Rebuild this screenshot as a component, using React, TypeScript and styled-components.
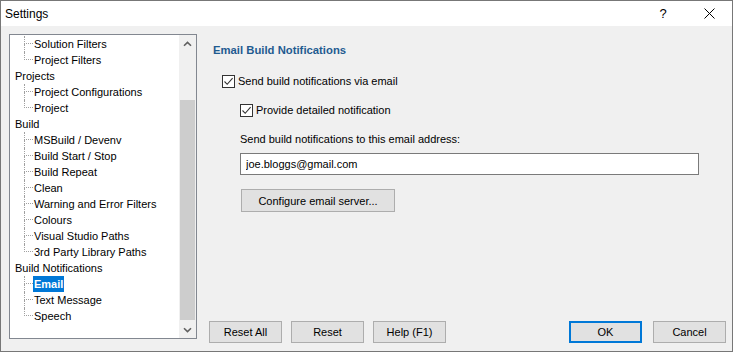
import styled, { createGlobalStyle } from 'styled-components';

const GlobalStyle = createGlobalStyle`
	html, body {
		margin: 0;
		padding: 0;
		background: #ffffff;
	}
	body {
		font-family: "Liberation Sans", Arial, sans-serif;
		font-size: 11px;
		color: #000000;
	}
	* {
		box-sizing: border-box;
	}
`

interface ITreeItem {
	label: string;
	child?: boolean;
	last?: boolean;
	selected?: boolean;
}

const treeItems: ITreeItem[] = [
	{ label: 'Solution Filters', child: true },
	{ label: 'Project Filters', child: true, last: true },
	{ label: 'Projects' },
	{ label: 'Project Configurations', child: true },
	{ label: 'Project', child: true, last: true },
	{ label: 'Build' },
	{ label: 'MSBuild / Devenv', child: true },
	{ label: 'Build Start / Stop', child: true },
	{ label: 'Build Repeat', child: true },
	{ label: 'Clean', child: true },
	{ label: 'Warning and Error Filters', child: true },
	{ label: 'Colours', child: true },
	{ label: 'Visual Studio Paths', child: true },
	{ label: '3rd Party Library Paths', child: true, last: true },
	{ label: 'Build Notifications' },
	{ label: 'Email', child: true, selected: true },
	{ label: 'Text Message', child: true },
	{ label: 'Speech', child: true, last: true },
];

function CheckMark(): JSX.Element {
	return (
		<svg width="11" height="11" viewBox="0 0 11 11">
			<path d="M1.5 5.5 L4.2 8.3 L9.6 2.2" fill="none" stroke="#333333" strokeWidth="1.1" />
		</svg>
	)
}

function Chevron({ down }: { down?: boolean }): JSX.Element {
	return (
		<svg width="9" height="6" viewBox="0 0 9 6">
			<path
				d={down ? 'M1 1.2 L4.5 4.6 L8 1.2' : 'M1 4.8 L4.5 1.4 L8 4.8'}
				fill="none"
				stroke="#606060"
				strokeWidth="1.6" />
		</svg>
	)
}

function CheckOption({ indent, label }: { indent: number; label: string }): JSX.Element {
	return (
		<CheckRow $indent={indent}>
			<CheckBox>
				<CheckMark />
			</CheckBox>
			<span>{label}</span>
		</CheckRow>
	)
}

function App(): JSX.Element {
	return (
		<>
			<GlobalStyle />
			<Window>
				<TitleBar>
					<Title>Settings</Title>
					<CaptionButton>?</CaptionButton>
					<CaptionButton>
						<svg width="11" height="11" viewBox="0 0 11 11">
							<path d="M0.5 0.5 L10.5 10.5 M10.5 0.5 L0.5 10.5" stroke="#000000" strokeWidth="1" />
						</svg>
					</CaptionButton>
				</TitleBar>

				<Body>
					<TreeBox>
						<TreeList>
							{treeItems.map((item) => (
								<TreeRow key={item.label} $child={!!item.child}>
									{item.child && (
										<Connector>
											<ConnectorTop />
											<ConnectorBottom $last={!!item.last} />
										</Connector>
									)}
									<TreeLabel $selected={!!item.selected}>
										{item.label}
									</TreeLabel>
								</TreeRow>
							))}
						</TreeList>
						<ScrollBar>
							<ScrollArrow>
								<Chevron />
							</ScrollArrow>
							<ScrollTrack>
								<ScrollThumb />
							</ScrollTrack>
							<ScrollArrow>
								<Chevron down />
							</ScrollArrow>
						</ScrollBar>
					</TreeBox>

					<Panel>
						<Content>
							<Heading>Email Build Notifications</Heading>
							<CheckOption indent={9} label="Send build notifications via email" />
							<CheckOption indent={27} label="Provide detailed notification" />
							<FieldLabel>Send build notifications to this email address:</FieldLabel>
							<EmailInput readOnly value="joe.bloggs@gmail.com" />
							<ConfigureButton>Configure email server...</ConfigureButton>
						</Content>

						<ButtonRow>
							<ButtonGroup>
								<DialogButton>Reset All</DialogButton>
								<DialogButton>Reset</DialogButton>
								<DialogButton>Help (F1)</DialogButton>
							</ButtonGroup>
							<ButtonGroup $wide>
								<DialogButton $default>OK</DialogButton>
								<DialogButton>Cancel</DialogButton>
							</ButtonGroup>
						</ButtonRow>
					</Panel>
				</Body>
			</Window>
		</>
	)
}

export default App;

const Window = styled.div`
    width : 733px;
    height : 352px;
    display : flex;
    flex-direction : column;
    border : 1px solid #777777;
    background-color : #f0f0f0;
`

const TitleBar = styled.div`
    height : 25px;
    display : flex;
    align-items : center;
    background-color : #ffffff;
    user-select : none;
`

const Title = styled.span`
    flex : 1;
    padding-left : 4px;
    font-size : 12px;
`

const CaptionButton = styled.div`
    width : 46px;
    height : 25px;
    display : flex;
    align-items : center;
    justify-content : center;
    font-size : 13px;
`

const Body = styled.div`
    flex : 1;
    display : flex;
    padding : 8px 6px 8px 8px;
    min-height : 0;
`

const TreeBox = styled.div`
    width : 188px;
    margin-bottom : 4px;
    display : flex;
    background-color : #ffffff;
    border : 1px solid #828790;
`

const TreeList = styled.div`
    flex : 1;
    padding-top : 1px;
    overflow : hidden;
`

const TreeRow = styled.div<{ $child: boolean }>`
    height : 16px;
    display : flex;
    align-items : center;
    padding-left : ${(props) => (props.$child ? '14px' : '4px')};
    white-space : nowrap;
`

const Connector = styled.span`
    width : 9px;
    height : 16px;
    display : flex;
    flex-direction : column;
`

const ConnectorTop = styled.span`
    height : 8px;
    border-left : 1px dotted #a0a0a0;
    border-bottom : 1px dotted #a0a0a0;
`

const ConnectorBottom = styled.span<{ $last: boolean }>`
    height : 8px;
    border-left : ${(props) => (props.$last ? 'none' : '1px dotted #a0a0a0')};
`

const TreeLabel = styled.span<{ $selected: boolean }>`
    height : 16px;
    line-height : 16px;
    padding : 0 1px;
    color : ${(props) => (props.$selected ? '#ffffff' : '#000000')};
    background-color : ${(props) => (props.$selected ? '#0078d7' : 'transparent')};
    font-weight : ${(props) => (props.$selected ? 'bold' : 'normal')};
`

const ScrollBar = styled.div`
    width : 17px;
    display : flex;
    flex-direction : column;
    background-color : #f0f0f0;
`

const ScrollArrow = styled.div`
    height : 17px;
    display : flex;
    align-items : center;
    justify-content : center;
`

const ScrollTrack = styled.div`
    flex : 1;
    display : flex;
    flex-direction : column;
    padding : 48px 1px 1px 1px;
`

const ScrollThumb = styled.div`
    flex : 1;
    background-color : #cdcdcd;
`

const Panel = styled.div`
    flex : 1;
    display : flex;
    flex-direction : column;
    padding-left : 12px;
`

const Content = styled.div`
    flex : 1;
    display : flex;
    flex-direction : column;
    align-items : flex-start;
    padding : 8px 0 0 4px;
`

const Heading = styled.div`
    height : 16px;
    line-height : 16px;
    font-weight : bold;
    font-size : 11.3px;
    color : #1f5b90;
`

const CheckRow = styled.div<{ $indent: number }>`
    height : 16px;
    display : flex;
    align-items : center;
    gap : 3px;
    margin-left : ${(props) => props.$indent}px;
    margin-top : 15px;
    & + & {
        margin-top : 13px;
    }
`

const CheckBox = styled.span`
    width : 13px;
    height : 13px;
    display : flex;
    align-items : center;
    justify-content : center;
    background-color : #ffffff;
    border : 1px solid #333333;
`

const FieldLabel = styled.div`
    height : 16px;
    line-height : 16px;
    margin : 13px 0 0 27px;
`

const EmailInput = styled.input`
    width : 459px;
    height : 22px;
    margin : 6px 0 0 27px;
    padding : 0 5px;
    font : inherit;
    color : #000000;
    background-color : #ffffff;
    border : 1px solid #7a7a7a;
    outline : none;
`

const ConfigureButton = styled.div`
    width : 154px;
    height : 23px;
    margin : 14px 0 0 28px;
    display : flex;
    align-items : center;
    justify-content : center;
    background-color : #e1e1e1;
    border : 1px solid #adadad;
`

const ButtonRow = styled.div`
    display : flex;
    justify-content : space-between;
`

const ButtonGroup = styled.div<{ $wide?: boolean }>`
    display : flex;
    gap : ${(props) => (props.$wide ? '11px' : '9px')};
`

const DialogButton = styled.div<{ $default?: boolean }>`
    width : 73px;
    height : 22px;
    display : flex;
    align-items : center;
    justify-content : center;
    background-color : #e1e1e1;
    border : ${(props) => (props.$default ? '2px solid #0078d7' : '1px solid #adadad')};
`
